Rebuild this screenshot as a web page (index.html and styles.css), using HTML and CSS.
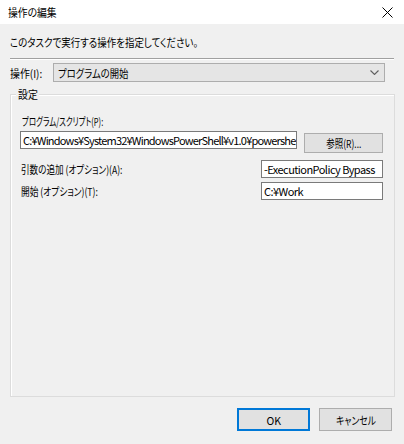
FILE: index.html
```html
<!DOCTYPE html>
<html lang="ja">
<head>
<meta charset="utf-8">
<link rel="stylesheet" href="styles.css">
</head>
<body>
<div class="window">
  <div class="titlebar">
    <span class="t title">操作の編集</span>
    <svg class="close" width="11" height="11" viewBox="0 0 11 11"><path d="M0.5 0.5 L10.5 10.5 M10.5 0.5 L0.5 10.5" stroke="#000" stroke-width="1" fill="none"/></svg>
  </div>
  <div class="content">
    <div class="instruction"><span class="t instr-text">このタスクで実行する操作を指定してください。</span></div>
    <div class="sep"></div>
    <div class="action-row">
      <span class="label"><span class="t op-text">操作(I):</span></span>
      <div class="combo">
        <span class="t combo-text">プログラムの開始</span>
        <svg class="chev" width="9" height="5" viewBox="0 0 9 5"><path d="M0.5 0.5 L4.5 4.5 L8.5 0.5" stroke="#606060" stroke-width="1.1" fill="none"/></svg>
      </div>
    </div>
    <div class="group">
      <div class="group-title"><span class="t set-text">設定</span></div>
      <div class="prog-label"><span class="t prog-text">プログラム/スクリプト(P):</span></div>
      <div class="prog-row">
        <div class="textbox prog-box">C:¥Windows¥System32¥WindowsPowerShell¥v1.0¥powershe</div>
        <div class="btn browse"><span class="t browse-text">参照(R)...</span></div>
      </div>
      <div class="field-row args-row">
        <span class="label"><span class="t args-text">引数の追加 (オプション)(A):</span></span>
        <div class="textbox small-box">-ExecutionPolicy Bypass</div>
      </div>
      <div class="field-row start-row">
        <span class="label"><span class="t start-text">開始 (オプション)(T):</span></span>
        <div class="textbox small-box">C:¥Work</div>
      </div>
    </div>
    <div class="footer">
      <div class="btn ok"><span class="t ok-text">OK</span></div>
      <div class="btn cancel"><span class="t cancel-text">キャンセル</span></div>
    </div>
  </div>
</div>
</body>
</html>
```
FILE: styles.css
```css
html, body {
  margin: 0;
  padding: 0;
}
body {
  width: 404px;
  height: 444px;
  overflow: hidden;
  background: #f0f0f0;
  font-family: "Noto Sans CJK JP", "Liberation Sans", sans-serif;
  font-size: 11px;
  font-feature-settings: "palt" 1;
  color: #000;
}
.t {
  display: inline-block;
  white-space: nowrap;
  transform-origin: left center;
  line-height: 14px;
}
.window {
  width: 404px;
  height: 444px;
  display: flex;
  flex-direction: column;
}
.titlebar {
  height: 24px;
  flex: none;
  background: #fff;
  display: flex;
  align-items: center;
  justify-content: space-between;
  padding: 0 11px 0 8px;
}
.title {
  margin-top: -1px;
  transform: scaleX(0.89);
}
.close {
  display: block;
}
.content {
  flex: 1;
  display: flex;
  flex-direction: column;
  padding: 0 9px 13px 10px;
}
.instruction {
  margin-top: 11px;
  line-height: 14px;
}
.instr-text {
  transform: scaleX(0.86);
}
.sep {
  margin-top: 9px;
  height: 1px;
  background: #a0a0a0;
  border-bottom: 1px solid #fff;
  margin-right: 1px;
}
.action-row {
  margin-top: 3px;
  display: flex;
  align-items: center;
}
.label {
  line-height: 14px;
  white-space: nowrap;
}
.action-row .label {
  width: 43px;
  flex: none;
}
.op-text {
  transform: scaleX(0.9);
}
.combo {
  width: 332px;
  height: 19px;
  box-sizing: border-box;
  border: 1px solid #adadad;
  background: #e5e5e5;
  display: flex;
  align-items: center;
  justify-content: space-between;
  padding: 0 5px 0 4px;
}
.combo-text {
  transform: scaleX(0.85);
}
.group {
  margin-top: 12px;
  flex: 1;
  border: 1px solid #dcdcdc;
  box-shadow: inset 1px 1px 0 #fff;
  padding: 0 11px 0 9px;
  display: flex;
  flex-direction: column;
}
.group-title {
  margin: -8px 0 0 -4px;
  padding: 0 1px 0 2px;
  width: 20px;
  background: #f0f0f0;
  line-height: 14px;
}
.set-text {
  transform: scaleX(0.9);
}
.prog-label {
  margin-top: 13px;
  padding-left: 2px;
  line-height: 14px;
}
.prog-text {
  transform: scaleX(0.68);
}
.prog-row {
  margin-top: 3px;
  display: flex;
  align-items: flex-start;
  gap: 7px;
}
.textbox {
  box-sizing: border-box;
  height: 18px;
  border: 1px solid #7a7a7a;
  background: #fff;
  padding: 0 2px;
  line-height: 16px;
  letter-spacing: -0.55px;
  white-space: nowrap;
  overflow: hidden;
}
.prog-box {
  width: 277px;
  flex: none;
  letter-spacing: -0.8px;
}
.btn {
  box-sizing: border-box;
  border: 1px solid #adadad;
  background: #e1e1e1;
  display: flex;
  align-items: center;
  justify-content: center;
  line-height: 14px;
}
.btn .t {
  transform-origin: center center;
}
.browse {
  margin-top: 2px;
  width: 79px;
  height: 20px;
  flex: none;
}
.browse-text {
  transform: scaleX(0.77);
}
.field-row {
  display: flex;
  align-items: center;
  justify-content: space-between;
  padding-left: 1px;
}
.args-row {
  margin-top: 7px;
}
.args-text {
  transform: scaleX(0.78);
}
.start-row {
  margin-top: 4px;
}
.start-text {
  transform: scaleX(0.79);
}
.small-box {
  width: 122px;
  flex: none;
}
.footer {
  margin-top: 11px;
  display: flex;
  justify-content: flex-end;
  gap: 9px;
  padding-right: 3px;
}
.ok, .cancel {
  width: 73px;
  height: 23px;
}
.ok {
  border: 2px solid #0078d7;
}
.ok-text {
  transform: scaleX(0.95);
}
.cancel-text {
  transform: scaleX(0.8);
}
```
